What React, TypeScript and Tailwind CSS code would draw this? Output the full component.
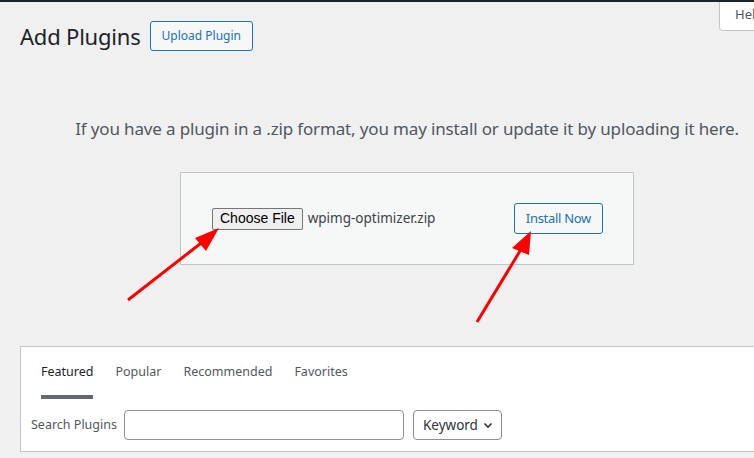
import React from "react";

export default function App() {
  const ui = { fontFamily: '"Noto Sans", "Open Sans", sans-serif' };
  return (
    <div
      className="relative w-[754px] h-[458px] overflow-hidden bg-[#f0f0f1] border-t-2 border-[#1d2327] text-[#1d2327]"
      style={ui}
    >
      {/* Help tab */}
      <div className="absolute left-[719px] top-0 w-[60px] h-[29px] bg-white border border-t-0 border-[#c3c4c7] rounded-bl-[4px] pl-[15px] pt-[3px] text-[13px] text-[#50575e]">
        Help
      </div>

      <div className="w-[774px] ml-[20px]">
        {/* Header */}
        <div className="flex items-center gap-[9px] pt-[19px]">
          <h1 className="text-[22px] leading-[29px] tracking-[-0.2px]">Add Plugins</h1>
          <button className="h-[30px] px-[11px] text-[12px] text-[#2271b1] border border-[#2271b1] rounded-[3px] bg-[#f6f7f7]">
            Upload Plugin
          </button>
        </div>

        {/* Upload section */}
        <p className="mt-[66px] text-center text-[17px] leading-[24px] tracking-[-0.15px] text-[#50575e]">
          If you have a plugin in a .zip format, you may install or update it by uploading it here.
        </p>

        <div className="mx-auto mt-[31px] w-[454px] h-[93px] bg-[#f6f7f7] border border-[#c3c4c7] flex items-center justify-between pl-[31px] pr-[30px]">
          <div className="flex items-center gap-[5px]">
            <span
              className="inline-flex items-center h-[22px] px-[7px] bg-[#efefef] border border-[#767676] rounded-[2px] text-[14px] text-black"
              style={{ fontFamily: '"Liberation Sans", Arial, sans-serif' }}
            >
              Choose File
            </span>
            <span className="text-[13.5px] text-[#3c434a]">wpimg-optimizer.zip</span>
          </div>
          <button className="h-[31px] px-[11px] text-[13px] tracking-[-0.3px] text-[#2271b1] border border-[#2271b1] rounded-[3px] bg-[#f6f7f7]">
            Install Now
          </button>
        </div>

        {/* Plugins panel */}
        <div className="mt-[81px] h-[106px] bg-white border border-[#c3c4c7]">
          <div className="flex gap-[22px] pl-[20px] pt-[14px] text-[12.5px]">
            <div className="flex flex-col">
              <span className="leading-[22px] text-[#1d2327]">Featured</span>
              <span className="mt-[12px] h-[4px] bg-[#646970]" />
            </div>
            <span className="leading-[22px] text-[#50575e]">Popular</span>
            <span className="leading-[22px] text-[#50575e]">Recommended</span>
            <span className="leading-[22px] text-[#50575e]">Favorites</span>
          </div>
          <div className="flex items-center pl-[10px] mt-[11px]">
            <span className="text-[12.5px] text-[#50575e] mr-[7px]">Search Plugins</span>
            <div className="w-[280px] h-[30px] border border-[#8c8f94] rounded-[4px] bg-white" />
            <div className="ml-[9px] w-[89px] h-[30px] border border-[#8c8f94] rounded-[4px] bg-white flex items-center pl-[9px] text-[13.5px] text-[#2c3338]">
              Keyword
              <svg width="12" height="12" viewBox="0 0 12 12" className="ml-[4px]">
                <path d="M2.5 4.5 L6 8 L9.5 4.5" fill="none" stroke="#2c3338" strokeWidth="1.6" />
              </svg>
            </div>
          </div>
        </div>
      </div>

      {/* Arrows */}
      <svg className="absolute left-0 top-0 pointer-events-none" width="754" height="458">
        <line x1="128" y1="298" x2="205" y2="238" stroke="#ff0000" strokeWidth="3" />
        <polygon points="219,226 195,236 206,249" fill="#ff0000" />
        <line x1="477" y1="320" x2="523" y2="244" stroke="#ff0000" strokeWidth="3" />
        <polygon points="531,229 512,246 529,253" fill="#ff0000" />
      </svg>
    </div>
  );
}
